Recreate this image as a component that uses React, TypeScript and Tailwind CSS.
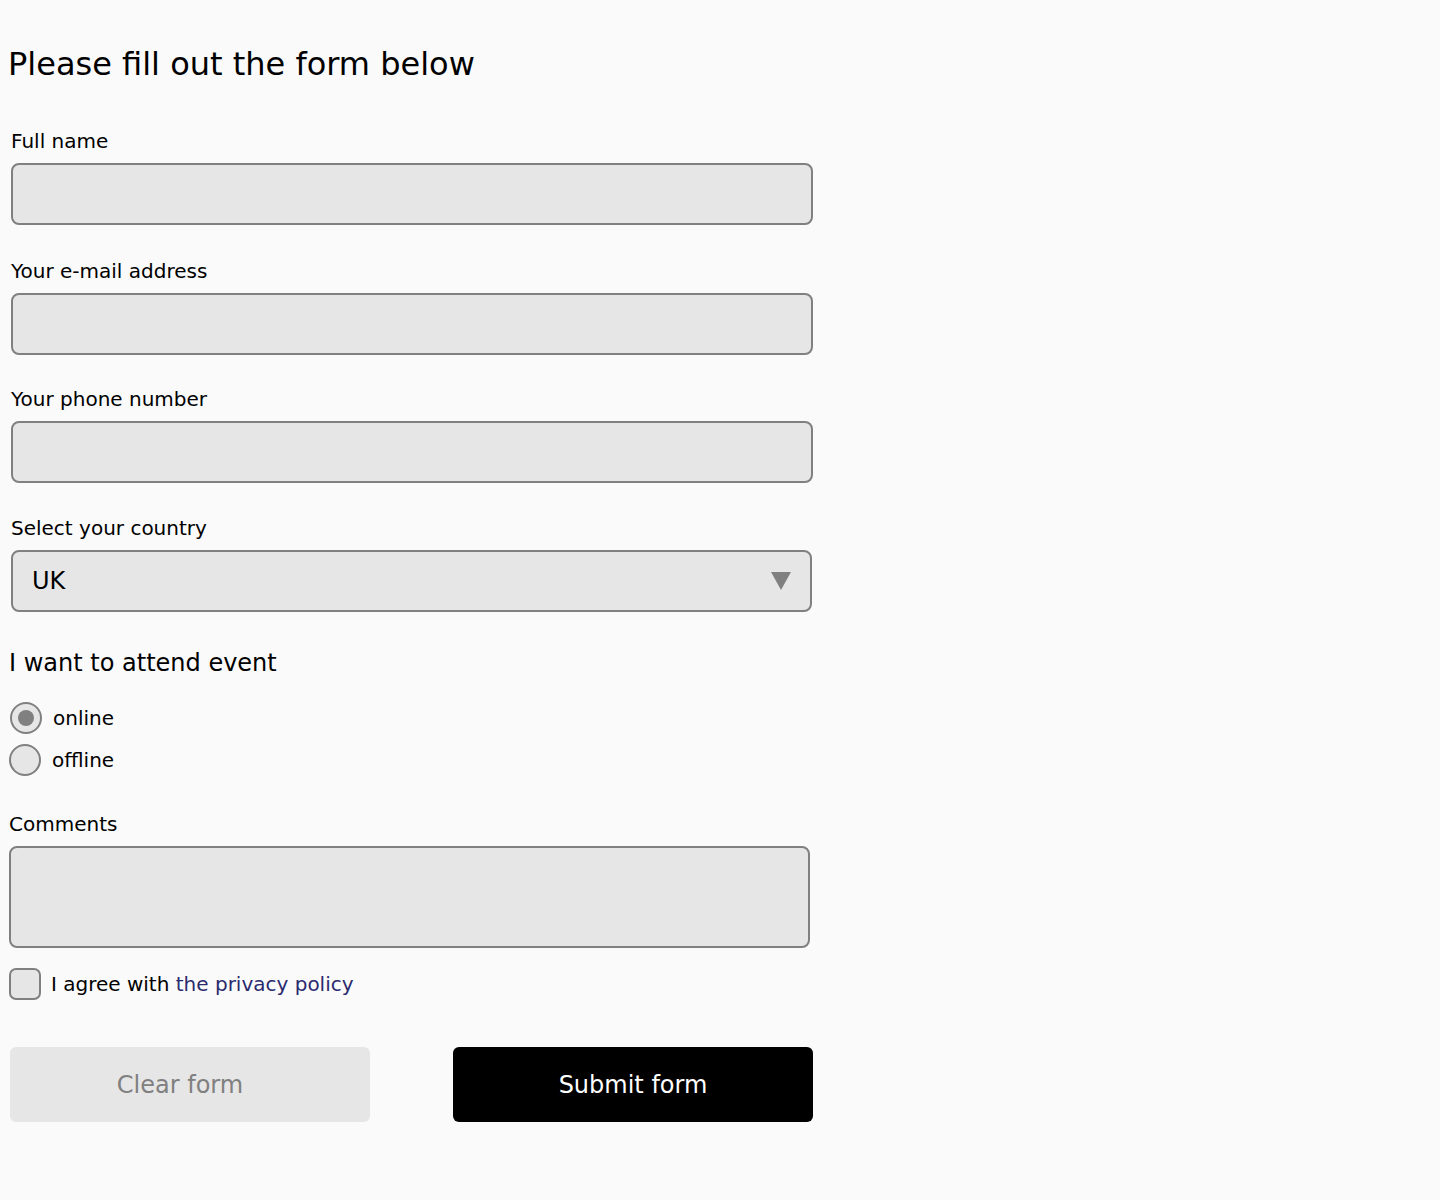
import { useState } from "react";

const font = { fontFamily: '"DejaVu Sans", "Noto Sans", sans-serif' };

function Field({
  label,
  top,
  type = "text",
}: {
  label: string;
  top: string;
  type?: string;
}) {
  return (
    <div className={top}>
      <label className="block text-[20px] leading-[22px] text-black">{label}</label>
      <input
        type={type}
        className="mt-[11px] block h-[62px] w-[802px] rounded-[8px] border-2 border-[#808080] bg-[#e6e6e6] px-5 text-[24px] outline-none"
      />
    </div>
  );
}

export default function App() {
  const [attend, setAttend] = useState("online");
  const [agree, setAgree] = useState(false);

  return (
    <main className="min-h-[1200px] bg-[#fafafa] pt-[45px] text-black" style={font}>
      <form className="pl-[10px]" onSubmit={(e) => e.preventDefault()}>
        <h1 className="-ml-[2px] text-[32px] leading-[38px] font-normal">
          Please fill out the form below
        </h1>

        <div className="pl-[1px]">
          <Field label="Full name" top="mt-[47px]" />
          <Field label="Your e-mail address" top="mt-[35px]" type="email" />
          <Field label="Your phone number" top="mt-[33px]" type="tel" />

          <div className="mt-[34px]">
            <label className="block text-[20px] leading-[22px]">Select your country</label>
            <div className="relative mt-[11px] w-[801px]">
              <select className="block h-[62px] w-full appearance-none rounded-[8px] border-2 border-[#808080] bg-[#e6e6e6] px-[19px] text-[24px] outline-none">
                <option>UK</option>
                <option>USA</option>
                <option>Germany</option>
              </select>
              <svg
                className="pointer-events-none absolute right-[21px] top-[22px]"
                width="20"
                height="18"
                viewBox="0 0 20 18"
              >
                <polygon points="0,0 20,0 10,18" fill="#808080" />
              </svg>
            </div>
          </div>
        </div>

        <p className="mt-[37px] -ml-[1px] text-[24px] leading-[28px]">I want to attend event</p>

        <div className="mt-[25px] flex flex-col gap-[10px]">
          {["online", "offline"].map((opt, i) => (
            <label
              key={opt}
              className={`flex items-center gap-[11px] text-[20px] ${i === 0 ? "" : "-ml-[1px]"}`}
            >
              <span
                className="flex h-[32px] w-[32px] items-center justify-center rounded-full border-2 border-[#808080] bg-[#e6e6e6]"
                onClick={() => setAttend(opt)}
              >
                {attend === opt && <span className="h-[16px] w-[16px] rounded-full bg-[#808080]" />}
              </span>
              {opt}
            </label>
          ))}
        </div>

        <div className="mt-[37px] -ml-[1px]">
          <label className="block text-[20px] leading-[22px]">Comments</label>
          <textarea className="mt-[11px] block h-[102px] w-[801px] resize-none rounded-[8px] border-2 border-[#808080] bg-[#e6e6e6] px-5 py-3 text-[20px] outline-none" />
        </div>

        <label className="mt-[20px] -ml-[1px] flex items-center gap-[10px] text-[20px]">
          <span
            className="flex h-[32px] w-[32px] items-center justify-center rounded-[7px] border-2 border-[#808080] bg-[#e6e6e6]"
            onClick={() => setAgree(!agree)}
          >
            {agree && <span className="text-[18px] text-[#808080]">✓</span>}
          </span>
          <span>
            I agree with <a href="#" className="text-[#2b2a6e]">the privacy policy</a>
          </span>
        </label>

        <div className="mt-[47px] flex gap-[83px]">
          <button
            type="reset"
            className="h-[75px] w-[360px] rounded-[6px] bg-[#e6e6e6] pr-[20px] text-[24px] text-[#808080]"
          >
            Clear form
          </button>
          <button
            type="submit"
            className="h-[75px] w-[360px] rounded-[6px] bg-black text-[24px] text-white"
          >
            Submit form
          </button>
        </div>
      </form>
    </main>
  );
}
